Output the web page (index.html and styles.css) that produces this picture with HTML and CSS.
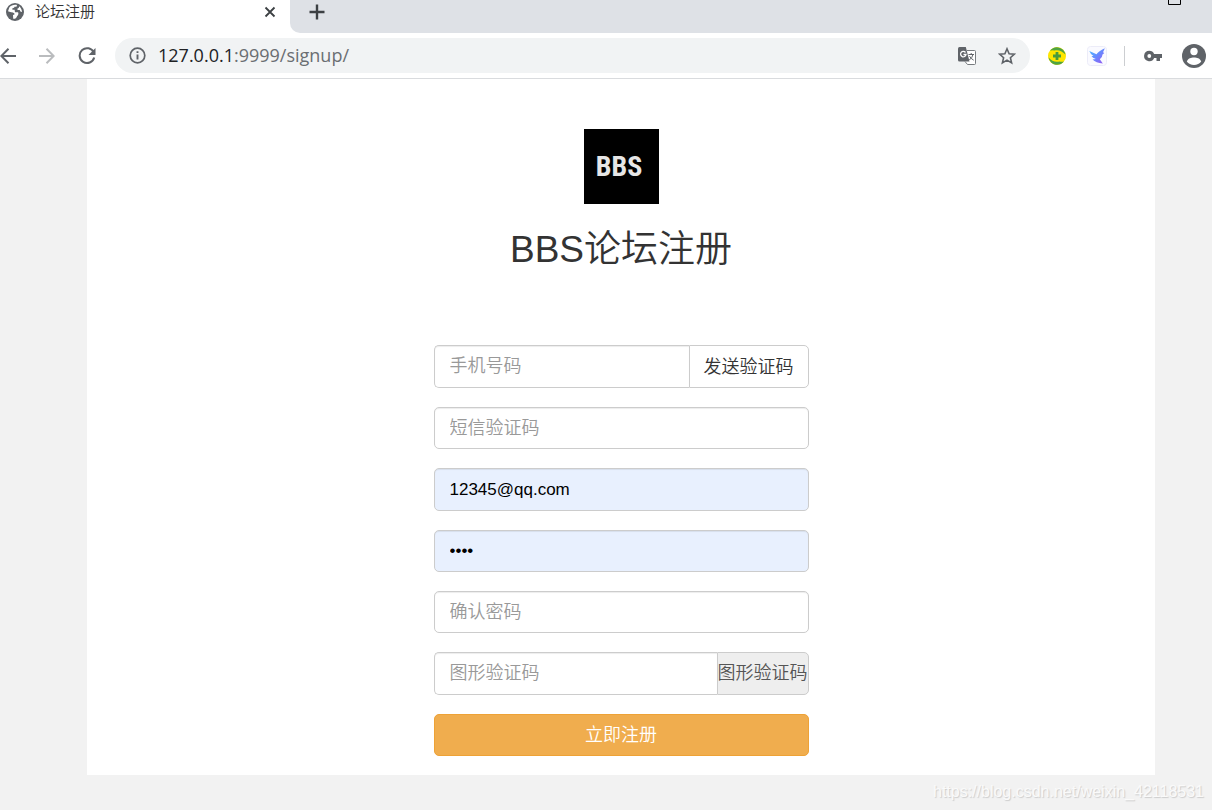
FILE: index.html
```html
<!DOCTYPE html>
<html lang="zh-CN">
<head>
<meta charset="utf-8">
<meta name="viewport" content="width=device-width, initial-scale=1">
<title>论坛注册</title>
<link rel="stylesheet" href="styles.css">
</head>
<body>
<header class="browser">
  <div class="tabstrip">
    <div class="tab">
      <svg class="tab-icon" viewBox="0 0 18 18" aria-hidden="true"><circle cx="9" cy="9" r="9" fill="#5f6368"/><path d="M11 2.100C8.600 1.300 5 2.300 3.300 4.600L2 8.300C3.500 9.300 7 9.200 8.200 10.200C9 11.200 8.300 11.800 7 12L7.200 15.700C9 16.300 10.700 14.800 11 13.200C12.500 12.300 12.700 10.200 12 9.300H9L8.600 6.800H6.400V5.200C8 5.200 8.400 4.800 8.400 3.800H10.500Z" fill="#fff"/><path d="M13 3.200C14.700 4.400 16 6.500 16 9C14.500 9 14 8.300 13.800 7H11.500V5.600C12.800 5.300 13.100 4.500 13 3.200Z" fill="#fff"/></svg>
      <span class="tab-title">论坛注册</span>
      <button class="icon-button tab-close" type="button" aria-label="关闭标签页">
        <svg width="12" height="12" viewBox="0 0 12 12"><path d="M1.500 1.500L10.500 10.500M10.500 1.500L1.500 10.500" stroke="#3c4043" stroke-width="1.800"/></svg>
      </button>
    </div>
    <div class="strip-rest">
      <button class="icon-button" type="button" aria-label="新标签页">
        <svg width="16" height="16" viewBox="0 0 16 16"><path d="M8 .5V15.500M.5 8H15.500" stroke="#3c4043" stroke-width="2.400"/></svg>
      </button>
      <button class="icon-button window-button" type="button" aria-label="最大化">
        <svg width="13" height="5" viewBox="0 0 13 5"><path d="M.5 0V4.500H12.500V0" fill="none" stroke="#000"/></svg>
      </button>
    </div>
  </div>
  <nav class="toolbar" aria-label="浏览器工具栏">
    <div class="nav-buttons">
      <button class="icon-button" type="button" aria-label="后退">
        <svg width="16" height="16" viewBox="0 0 16 16"><path d="M16 8H1.500M8.500 .8L1.300 8L8.500 15.200" fill="none" stroke="#5f6368" stroke-width="2"/></svg>
      </button>
      <button class="icon-button" type="button" aria-label="前进">
        <svg width="16" height="16" viewBox="0 0 16 16"><path d="M0 8H14.500M7.500 .8L14.700 8L7.500 15.200" fill="none" stroke="#babcbe" stroke-width="2"/></svg>
      </button>
      <button class="icon-button" type="button" aria-label="重新加载">
        <svg width="18" height="18" viewBox="0 0 18 18"><path d="M15.800 5.500A7.400 7.400 0 1 0 16.200 10.500" fill="none" stroke="#5f6368" stroke-width="2"/><path d="M17.500 1V8H10.500Z" fill="#5f6368"/></svg>
      </button>
    </div>
    <div class="address">
      <svg width="17" height="17" viewBox="0 0 17 17" aria-hidden="true"><circle cx="8.500" cy="8.500" r="7.300" fill="none" stroke="#5f6368" stroke-width="1.700"/><path d="M8.500 7.500V12.500M8.500 4.300V6.100" stroke="#5f6368" stroke-width="1.900"/></svg>
      <div class="url" role="textbox" aria-label="地址"><span class="url-host">127.0.0.1</span>:9999/signup/</div>
      <button class="icon-button" type="button" aria-label="翻译">
        <svg width="18" height="18" viewBox="0 0 18 18"><path d="M9 3.500H16.500Q17.500 3.500 17.500 4.500V16.500Q17.500 17.500 16.500 17.500H9.500L7 14.500" fill="#fff" stroke="#777b7f"/><path d="M1.500 0H7.800L11.500 14.500H1.500Q0 14.500 0 13V1.500Q0 0 1.500 0Z" fill="#5f6368"/><path d="M7.500 5.500A2.700 2.700 0 1 0 8 7.500H5.500" fill="none" stroke="#fff" stroke-width="1.300"/><path d="M10.500 7.500H16M13.200 6V7.500M15 7.500Q14.200 11 11.300 13M11.500 9.200Q13 11.800 15.700 13.200" fill="none" stroke="#5f6368"/></svg>
      </button>
      <button class="icon-button" type="button" aria-label="添加书签">
        <svg width="18" height="18" viewBox="0 0 18 18"><path d="M9 1.800L11.100 6.700L16.400 7.200L12.400 10.700L13.600 15.900L9 13.100L4.400 15.900L5.600 10.700L1.600 7.200L6.900 6.700Z" fill="none" stroke="#5f6368" stroke-width="1.600"/></svg>
      </button>
    </div>
    <div class="extensions">
      <button class="icon-button" type="button" aria-label="安全扩展">
        <svg width="20" height="20" viewBox="0 0 20 20"><circle cx="10" cy="10" r="9" fill="#ffe600"/><path d="M3 4.800C6 .4 12 0 16 3.800Q18 5.900 18.600 8.800C15.500 5 11 3.200 7.500 4.600Q5 3.800 3 4.800ZM17 15.200C14 19.600 8 20 4 16.200Q2 14.100 1.400 11.200C4.500 15 9 16.800 12.500 15.400Q15 16.200 17 15.200Z" fill="#4fa343"/><path d="M10 6V14M6 10H14" stroke="#4a9c3c" stroke-width="2.800"/></svg>
      </button>
      <button class="icon-button" type="button" aria-label="飞鸟扩展">
        <svg width="20" height="20" viewBox="0 0 20 20"><defs><linearGradient id="bird" x1="0" y1="0" x2="1" y2="1"><stop offset="0" stop-color="#48c3ff"/><stop offset=".5" stop-color="#6788ff"/><stop offset="1" stop-color="#9a57ef"/></linearGradient></defs><rect x=".5" y=".5" width="19" height="19" rx="3" fill="#fafaff" stroke="#ececf8"/><path d="M2.300 5L9.500 8.200Q11.500 5.200 17.800 2.300Q17 4.500 16 6.300L17.300 7L15.500 8.500Q15.300 12 12.800 13.200L15.800 17.500Q9 16.800 5.500 13.500L8.800 13Q5.500 12 4.500 10L6.500 9.900Q3.300 8 2.300 5Z" fill="url(#bird)"/></svg>
      </button>
      <span class="divider"></span>
      <button class="icon-button" type="button" aria-label="密码">
        <svg width="18" height="12" viewBox="0 0 18 12"><path d="M5.300 .8A5.200 5.200 0 1 0 10.100 8H12.500V11H16V8H18V4H10.100A5.200 5.200 0 0 0 5.300 .8Z" fill="#5f6368"/><circle cx="5.300" cy="6" r="1.900" fill="#fff"/></svg>
      </button>
      <button class="icon-button profile" type="button" aria-label="个人资料">
        <svg width="24" height="24" viewBox="0 0 24 24"><circle cx="12" cy="12" r="12" fill="#5f6368"/><circle cx="12" cy="7.500" r="3.700" fill="#fff"/><path d="M4.800 17.500C6 14.300 9 13.500 12 13.500S18 14.300 19.200 17.500C17.600 19.700 15 21 12 21S6.400 19.700 4.800 17.500Z" fill="#fff"/></svg>
      </button>
    </div>
  </nav>
</header>
<main class="page">
  <section class="panel">
    <div class="logo">BBS</div>
    <h1 class="title">BBS论坛注册</h1>
    <form class="signup">
      <div class="group">
        <input class="field" type="tel" placeholder="手机号码" aria-label="手机号码">
        <button class="send" type="button">发送验证码</button>
      </div>
      <input class="field" type="text" placeholder="短信验证码" aria-label="短信验证码">
      <input class="field filled tall" type="text" value="12345@qq.com" aria-label="邮箱">
      <input class="field filled" type="password" value="1234" aria-label="密码">
      <input class="field" type="password" placeholder="确认密码" aria-label="确认密码">
      <div class="group">
        <input class="field" type="text" placeholder="图形验证码" aria-label="图形验证码">
        <span class="captcha">图形验证码</span>
      </div>
      <button class="submit" type="submit">立即注册</button>
    </form>
  </section>
  <div class="watermark">https://blog.csdn.net/weixin_42118531</div>
</main>
</body>
</html>
```
FILE: styles.css
```css
* { box-sizing: border-box; }

body {
  margin: 0;
  min-height: 100vh;
  display: flex;
  flex-direction: column;
  background: #f2f2f2;
  color: #333;
  font-family: "Liberation Sans", "Noto Sans CJK SC", sans-serif;
  font-size: 18px;
}

button, input { font: inherit; }
svg { display: block; flex: none; }

.icon-button {
  display: flex;
  flex: none;
  padding: 0;
  border: 0;
  background: none;
}

.browser { background: #fff; border-bottom: 1px solid #d9dbde; }

.tabstrip { display: flex; height: 33px; }

.tab {
  display: flex;
  align-items: center;
  width: 290px;
  padding: 0 14px 9px 6px;
}
.tab-icon { width: 18px; height: 18px; }
.tab-title {
  flex: 1;
  margin-left: 11px;
  font-size: 15px;
  line-height: 24px;
  font-weight: 350;
}

.strip-rest {
  flex: 1;
  display: flex;
  justify-content: space-between;
  align-items: flex-start;
  padding: 4px 31px 0 19px;
  background: #dee1e6;
  border-bottom-left-radius: 10px;
}
.window-button { margin-top: -4px; }

.toolbar { display: flex; align-items: center; height: 45px; }
.nav-buttons { display: flex; align-items: center; gap: 23px; width: 115px; }

.address {
  flex: 1;
  display: flex;
  align-items: center;
  height: 35px;
  padding: 0 14px;
  border-radius: 18px;
  background: #f1f3f4;
}
.address .icon-button + .icon-button { margin-left: 22px; }
.url {
  flex: 1;
  margin-left: 12px;
  padding-bottom: 2px;
  color: #6a6e72;
  font-family: "Open Sans", "Noto Sans", sans-serif;
  font-size: 18px;
  line-height: 24px;
}
.url-host { color: #202124; }

.extensions { display: flex; align-items: center; gap: 20px; padding: 0 6px 0 17px; }
.divider { width: 1px; height: 20px; margin: 0 -1px 0 -3px; background: #ccced1; }

.page {
  position: relative;
  flex: 1;
  padding: 0 57px 35px 87px;
}

.panel {
  display: flex;
  flex-direction: column;
  align-items: center;
  padding: 50px 20px 19px;
  background: #fff;
}

.logo {
  display: flex;
  align-items: center;
  justify-content: center;
  width: 75px;
  height: 75px;
  padding-right: 4px;
  background: #000;
  color: #e6e6e6;
  font-family: "Liberation Sans Narrow", "Roboto Condensed", "DejaVu Sans Condensed", sans-serif;
  font-weight: 700;
  font-size: 28px;
}

.title {
  margin: 25px 0 75px;
  font-size: 37px;
  line-height: 41px;
  font-weight: 350;
}

.signup {
  display: flex;
  flex-direction: column;
  gap: 19px;
  width: 100%;
  max-width: 375px;
  font-weight: 350;
}

.group { display: flex; height: 43px; }
.group .field {
  flex: 1;
  height: 100%;
  border-right: 0;
  border-radius: 5px 0 0 5px;
}

.field {
  min-width: 0;
  width: 100%;
  height: 42px;
  padding: 0 15px;
  border: 1px solid #ccc;
  border-radius: 5px;
  background: #fff;
  box-shadow: inset 0 1px 1px rgba(0, 0, 0, .075);
  color: #000;
}
.field::placeholder { color: #999; opacity: 1; }
.filled { background: #e8f0fe; font-size: 17px; font-weight: 400; }
.tall { height: 43px; }

.send {
  width: 120px;
  padding: 0 0 4px;
  border: 1px solid #ccc;
  border-radius: 0 5px 5px 0;
  background: #fff;
  color: #333;
}

.captcha {
  display: flex;
  align-items: center;
  padding-bottom: 6px;
  border: 1px solid #ccc;
  border-radius: 0 5px 5px 0;
  background: #eee;
  color: #555;
}

.submit {
  height: 42px;
  padding: 0 0 4px;
  border: 1px solid #eea236;
  border-radius: 5px;
  background: #f0ad4e;
  color: #fff;
}

.watermark {
  position: absolute;
  right: 8px;
  bottom: 9px;
  color: #fafafa;
  font-size: 16px;
  line-height: 18px;
  text-shadow: 1px 1px 1px #ccc;
}
```
